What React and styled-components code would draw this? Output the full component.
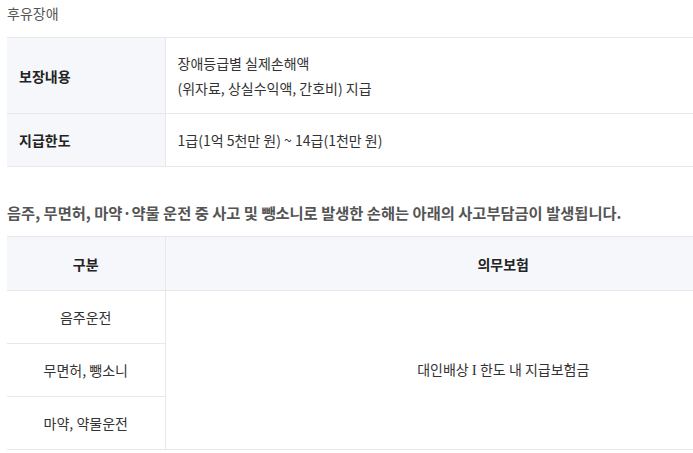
import { createGlobalStyle, styled } from "styled-components";

const GlobalStyle = createGlobalStyle`
  body {
    margin: 0;
    background: #fff;
    overflow: hidden;
    font-family: "Noto Sans CJK KR", "Noto Sans", sans-serif;
    color: #333;
  }
`;

const Frame = styled.div`
  width: 100%;
  overflow: hidden;
`;

// the content column is wider than the window and gets clipped on the right
const Page = styled.div`
  width: 834px;
  padding: 0 0 0 7px;
`;

const Title = styled.h3`
  margin: 0;
  padding-top: 3px;
  font-size: 14px;
  font-weight: 400;
  line-height: 20px;
  color: #555;
`;

const Note = styled.p`
  margin: 0;
  padding-top: 34px;
  font-size: 15.3px;
  font-weight: 700;
  line-height: 22px;
  color: #555;
`;

const Table = styled.table`
  width: 100%;
  border-collapse: collapse;
  table-layout: fixed;
  border-top: 1px solid #e6e8ec;
  margin-top: ${(p) => p.$gap}px;
`;

const Row = styled.tr`
  border-bottom: 1px solid #e6e8ec;
`;

const HeadCell = styled.th`
  background: #f6f7fa;
  border-right: 1px solid #e6e8ec;
  padding: 0 12px;
  height: ${(p) => p.$h}px;
  font-size: 14px;
  font-weight: 700;
  line-height: 20px;
  color: #222;
  text-align: left;
`;

const DataCell = styled.td`
  padding: 0 12px;
  height: ${(p) => p.$h}px;
  font-size: 14px;
  line-height: 25px;
  color: #333;
  text-align: ${(p) => (p.$center ? "center" : "left")};
  vertical-align: middle;
  border-right: ${(p) => (p.$divider ? "1px solid #e6e8ec" : "none")};
`;

const GridHead = styled.th`
  background: #f6f7fa;
  height: 53px;
  padding: 0;
  font-size: 14px;
  font-weight: 700;
  line-height: 20px;
  color: #222;
  text-align: center;
  border-right: ${(p) => (p.$divider ? "1px solid #e6e8ec" : "none")};
`;

const Roman = styled.span`
  font-family: "Liberation Serif", serif;
  font-size: 15px;
`;

const rows2 = ["음주운전", "무면허, 뺑소니", "마약, 약물운전"];

function App() {
  return (
    <>
      <GlobalStyle />
      <Frame>
        <Page>
          <Title>후유장애</Title>
          <Table $gap={14}>
            <colgroup>
              <col style={{ width: "158px" }} />
              <col />
            </colgroup>
            <tbody>
              <Row>
                <HeadCell $h={75}>보장내용</HeadCell>
                <DataCell $h={75}>
                  장애등급별 실제손해액
                  <br />
                  (위자료, 상실수익액, 간호비) 지급
                </DataCell>
              </Row>
              <Row>
                <HeadCell $h={52}>지급한도</HeadCell>
                <DataCell $h={52}>1급(1억 5천만 원) ~ 14급(1천만 원)</DataCell>
              </Row>
            </tbody>
          </Table>
          <Note>
            음주, 무면허, 마약·약물 운전 중 사고 및 뺑소니로 발생한 손해는
            아래의 사고부담금이 발생됩니다.
          </Note>
          <Table $gap={13}>
            <colgroup>
              <col style={{ width: "158px" }} />
              <col />
            </colgroup>
            <thead>
              <Row>
                <GridHead $divider>구분</GridHead>
                <GridHead>의무보험</GridHead>
              </Row>
            </thead>
            <tbody>
              {rows2.map((label, i) => (
                <Row key={label}>
                  <DataCell $h={52} $center $divider>
                    {label}
                  </DataCell>
                  {i === 0 && (
                    <DataCell $center rowSpan={3}>
                      대인배상 <Roman>I</Roman> 한도 내 지급보험금
                    </DataCell>
                  )}
                </Row>
              ))}
            </tbody>
          </Table>
        </Page>
      </Frame>
    </>
  );
}

export default App;
